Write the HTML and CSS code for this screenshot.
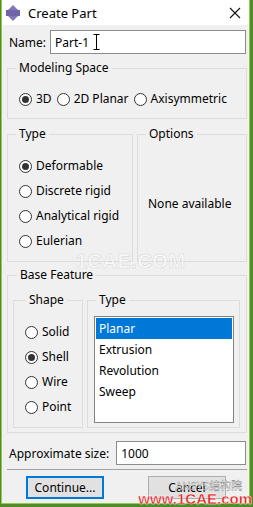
FILE: index.html
```html
<!DOCTYPE html>
<html lang="en">

<head>
    <meta charset="UTF-8">
    <meta name="viewport" content="width=device-width, initial-scale=1.0">
    <title>Create Part</title>
    <link rel="stylesheet" href="styles.css">
</head>

<body>
    <div class="window">
        <header class="title-bar">
            <svg class="app-icon" width="14" height="16" viewBox="0 0 14 16">
                <polygon points="7,0 12,5 2,5" fill="#8277b8" />
                <rect x="0" y="5" width="14" height="6" fill="#6f64a8" />
                <polygon points="2,11 12,11 7,16" fill="#8277b8" />
            </svg>
            <span class="title">Create Part</span>
            <svg class="close" width="12" height="12" viewBox="0 0 12 12">
                <path d="M1 1 L11 11 M11 1 L1 11" stroke="#111" stroke-width="1.1" />
            </svg>
        </header>

        <main class="content">
            <div class="field-row name-row">
                <label for="part-name">Name:</label>
                <input id="part-name" class="text-input" type="text" value="Part-1">
                <svg class="ibeam" width="7" height="16" viewBox="0 0 7 16">
                    <path d="M0.5 0.5 H6.5 M3.5 0.5 V15.5 M0.5 15.5 H6.5" stroke="#000" stroke-width="1" fill="none" />
                </svg>
            </div>

            <fieldset class="group modeling">
                <legend>Modeling Space</legend>
                <div class="radio-row">
                    <label class="radio checked"><span class="dot"></span>3D</label>
                    <label class="radio"><span class="dot"></span>2D Planar</label>
                    <label class="radio"><span class="dot"></span>Axisymmetric</label>
                </div>
            </fieldset>

            <div class="split">
                <fieldset class="group type-group">
                    <legend>Type</legend>
                    <div class="radio-list">
                        <label class="radio checked"><span class="dot"></span>Deformable</label>
                        <label class="radio"><span class="dot"></span>Discrete rigid</label>
                        <label class="radio"><span class="dot"></span>Analytical rigid</label>
                        <label class="radio"><span class="dot"></span>Eulerian</label>
                    </div>
                </fieldset>
                <fieldset class="group options-group">
                    <legend>Options</legend>
                    <p class="none">None available</p>
                </fieldset>
            </div>

            <fieldset class="group base">
                <legend>Base Feature</legend>
                <div class="base-inner">
                    <fieldset class="group shape">
                        <legend>Shape</legend>
                        <div class="radio-list">
                            <label class="radio"><span class="dot"></span>Solid</label>
                            <label class="radio checked"><span class="dot"></span>Shell</label>
                            <label class="radio"><span class="dot"></span>Wire</label>
                            <label class="radio"><span class="dot"></span>Point</label>
                        </div>
                    </fieldset>
                    <fieldset class="group feature-type">
                        <legend>Type</legend>
                        <ul class="listbox">
                            <li class="selected">Planar</li>
                            <li>Extrusion</li>
                            <li>Revolution</li>
                            <li>Sweep</li>
                        </ul>
                    </fieldset>
                </div>
            </fieldset>

            <div class="field-row size-row">
                <label for="approx-size">Approximate size:</label>
                <input id="approx-size" class="text-input" type="text" value="1000">
            </div>

            <hr class="separator">

            <div class="buttons">
                <button class="btn btn-default">Continue...</button>
                <button class="btn">Cancel</button>
            </div>
        </main>

        <div class="mark-center">1CAE.COM</div>
        <div class="mark-corner">
            <span class="wechat">ANSYS结构院</span>
            <span class="site">www.1CAE.com</span>
        </div>
    </div>
</body>

</html>
```

FILE: styles.css
```css
* {
    box-sizing: border-box;
}

html,
body {
    margin: 0;
    width: 253px;
    height: 507px;
    overflow: hidden;
}

body {
    background: #4f8d2c;
    font-family: "Noto Sans", "Noto Sans CJK SC", sans-serif;
    font-size: 12px;
    color: #000;
}

.window {
    position: relative;
    margin-left: 1px;
    width: 249px;
    height: 504px;
    background: #f0f0f0;
    border: 1px solid #93cb4a;
    border-top: none;
}

.title-bar {
    display: flex;
    align-items: center;
    height: 25px;
    background: #fff;
    padding: 0 8px 0 4px;
}

.app-icon {
    margin-right: 8px;
}

.title {
    font-size: 13px;
    flex: 1;
}

.content {
    display: flex;
    flex-direction: column;
    padding: 0 2px 0 5px;
}

.field-row {
    position: relative;
    display: flex;
    align-items: center;
    padding-left: 2px;
}

.name-row {
    margin-top: 5px;
}

.field-row label {
    margin-right: 4px;
    white-space: nowrap;
}

.size-row label {
    margin-right: 7px;
}

.text-input {
    flex: 1;
    min-width: 0;
    height: 24px;
    border: 1px solid #8c8c8c;
    background: #fff;
    font: inherit;
    padding: 0 4px;
    margin: 0 1px 0 0;
    outline: none;
}

.ibeam {
    position: absolute;
    left: 86px;
    top: 4px;
}

.group {
    margin: 0;
    border: 1px solid #dcdcdc;
    min-width: 0;
    padding-left: 8px;
}

.group legend {
    padding: 0 3px;
    margin-left: 0;
    line-height: 16px;
}

.modeling {
    margin-top: 6px;
    padding: 15px 4px 11px 11px;
}

.modeling legend {
    margin-left: -3px;
}

.radio-row {
    display: flex;
    gap: 5px;
}

.radio {
    display: flex;
    align-items: center;
    line-height: 16px;
    white-space: nowrap;
}

.dot {
    width: 13px;
    height: 13px;
    border: 1px solid #333;
    border-radius: 50%;
    background: #fff;
    margin-right: 4px;
    display: flex;
    align-items: center;
    justify-content: center;
}

.radio.checked .dot::after {
    content: "";
    width: 7px;
    height: 7px;
    border-radius: 50%;
    background: #333;
}

.split {
    display: flex;
    gap: 4px;
    margin-top: 7px;
}

.type-group {
    width: 126px;
    padding: 16px 4px 12px 8px;
}

.type-group .radio-list {
    margin-left: 3px;
}

.options-group {
    flex: 1;
    display: flex;
    flex-direction: column;
    padding: 0 4px 0 8px;
}

.radio-list {
    display: flex;
    flex-direction: column;
    gap: 9px;
}

.none {
    margin: 53px 0 0 2px;
}

.base {
    margin-top: 5px;
    padding: 9px 6px 4px 5px;
}

.base legend {
    margin-left: 4px;
}

.base-inner {
    display: flex;
    gap: 4px;
}

.shape {
    width: 70px;
    padding: 16px 2px 12px 8px;
}

.shape .radio-list {
    margin-left: 3px;
}

.feature-type {
    flex: 1;
    padding: 8px 5px 3px 6px;
}

.feature-type legend {
    margin-left: 2px;
}

.listbox {
    list-style: none;
    margin: 0;
    padding: 1px 1px;
    height: 107px;
    background: #fff;
    border: 1px solid #828282;
}

.listbox li {
    height: 21px;
    line-height: 21px;
    padding-left: 3px;
}

.listbox li.selected {
    background: #0078d7;
    color: #fff;
}

.size-row {
    margin-top: 8px;
}

.separator {
    margin: 4px 0 0 0;
    border: none;
    border-top: 1px solid #a0a0a0;
}

.buttons {
    display: flex;
    margin-top: 6px;
    padding-left: 19px;
    gap: 44px;
}

.btn {
    width: 78px;
    height: 23px;
    background: #e1e1e1;
    border: 1px solid #adadad;
    font: inherit;
    color: #000;
    padding: 0;
}

.btn-default {
    border: 2px solid #0078d7;
}

.mark-center {
    position: absolute;
    left: 74px;
    top: 250px;
    font: bold 20px "Liberation Sans", sans-serif;
    color: rgba(255, 255, 255, 0.6);
    -webkit-text-stroke: 0.5px rgba(180, 180, 180, 0.5);
    letter-spacing: 0.5px;
}

.mark-corner {
    position: absolute;
    right: -3px;
    bottom: -3px;
    display: flex;
    flex-direction: column;
    align-items: flex-end;
}

.wechat {
    font-size: 11px;
    color: rgba(255, 255, 255, 0.85);
    -webkit-text-stroke: 0.3px #777;
    margin-right: 10px;
    line-height: 11px;
}

.site {
    font: bold 15px "Liberation Sans", sans-serif;
    color: #e21b1b;
    -webkit-text-stroke: 0.4px #fff;
    line-height: 15px;
}
```
